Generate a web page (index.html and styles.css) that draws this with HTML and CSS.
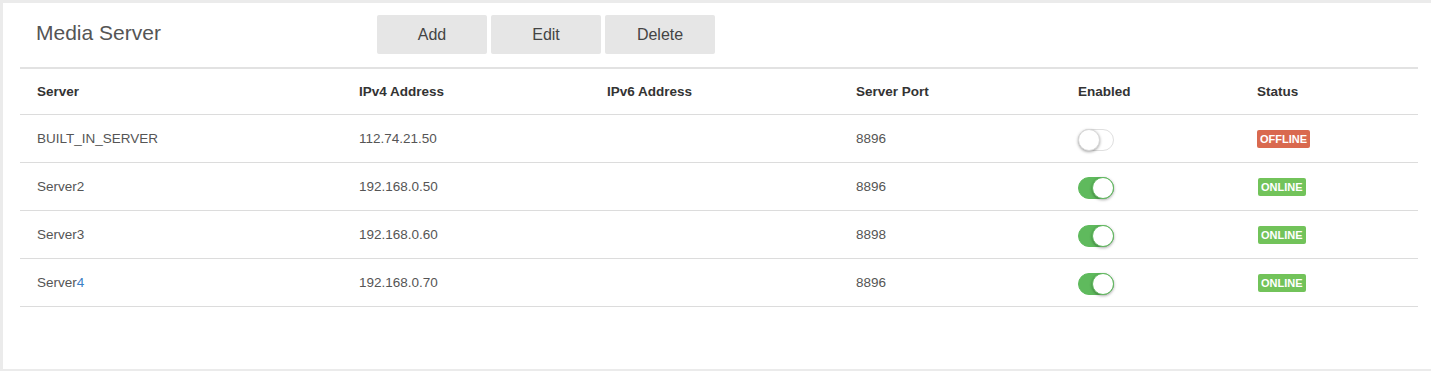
FILE: index.html
```html
<!DOCTYPE html>
<html lang="en">

<head>
  <meta charset="UTF-8">
  <title>Media Server</title>
  <link rel="stylesheet" href="styles.css">
</head>

<body>
  <div class="ms-panel">
    <!-- Title and actions -->
    <div class="ms-header">
      <h2 class="ms-title">Media Server</h2>
      <div class="ms-actions">
        <button class="ms-button">Add</button>
        <button class="ms-button">Edit</button>
        <button class="ms-button">Delete</button>
      </div>
    </div>

    <table class="ms-table">
      <colgroup>
        <col style="width: 322px">
        <col style="width: 248px">
        <col style="width: 249px">
        <col style="width: 222px">
        <col style="width: 179px">
        <col>
      </colgroup>
      <thead>
        <tr>
          <th>Server</th>
          <th>IPv4 Address</th>
          <th>IPv6 Address</th>
          <th>Server Port</th>
          <th>Enabled</th>
          <th>Status</th>
        </tr>
      </thead>
      <tbody>
        <tr>
          <td>BUILT_IN_SERVER</td>
          <td>112.74.21.50</td>
          <td></td>
          <td>8896</td>
          <td><span class="ms-switch"></span></td>
          <td><span class="ms-badge ms-badge-offline">OFFLINE</span></td>
        </tr>
        <tr>
          <td>Server2</td>
          <td>192.168.0.50</td>
          <td></td>
          <td>8896</td>
          <td><span class="ms-switch ms-switch-on"></span></td>
          <td><span class="ms-badge ms-badge-online">ONLINE</span></td>
        </tr>
        <tr>
          <td>Server3</td>
          <td>192.168.0.60</td>
          <td></td>
          <td>8898</td>
          <td><span class="ms-switch ms-switch-on"></span></td>
          <td><span class="ms-badge ms-badge-online">ONLINE</span></td>
        </tr>
        <tr>
          <td>Server<span class="ms-link">4</span></td>
          <td>192.168.0.70</td>
          <td></td>
          <td>8896</td>
          <td><span class="ms-switch ms-switch-on"></span></td>
          <td><span class="ms-badge ms-badge-online">ONLINE</span></td>
        </tr>
      </tbody>
    </table>
  </div>
</body>

</html>
```

FILE: styles.css
```css
body {
  margin: 0;
  padding: 3px 0 2px 3px;
  background-color: #ebebeb;
  font-family: 'Liberation Sans', Arial, sans-serif;
  color: #555;
}

/* White card */
.ms-panel {
  background-color: #fff;
  height: 366px;
  box-sizing: border-box;
  padding: 12px 13px 0 17px;
}

.ms-header {
  display: flex;
  align-items: center;
  height: 39px;
  margin-bottom: 13px;
}

.ms-title {
  margin: 0 0 4px 16px;
  width: 341px;
  font-size: 21px;
  font-weight: 400;
  color: #555;
}

.ms-actions {
  display: flex;
  gap: 4px;
}

.ms-button {
  width: 110px;
  height: 39px;
  padding-top: 2px;
  background-color: #e6e6e6;
  border: none;
  border-radius: 2px;
  font-family: inherit;
  font-size: 16px;
  color: #444;
  cursor: pointer;
}

.ms-button:hover {
  background-color: #dcdcdc;
}

/* Table */
.ms-table {
  width: 100%;
  table-layout: fixed;
  border-collapse: collapse;
  border-top: 2px solid #e2e2e2;
  font-size: 13.5px;
}

.ms-table th {
  height: 45px;
  padding: 0 17px;
  text-align: left;
  font-weight: 700;
  color: #333;
  border-bottom: 1px solid #dcdcdc;
}

.ms-table td {
  height: 47px;
  padding: 0 17px;
  border-bottom: 1px solid #dcdcdc;
  vertical-align: middle;
}

.ms-link {
  color: #3b7fc4;
}

/* Toggle switch */
.ms-switch {
  display: block;
  position: relative;
  width: 36px;
  height: 22px;
  box-sizing: border-box;
  border: 1px solid #dfdfdf;
  border-radius: 11px;
  background-color: #fff;
  margin-top: 2px;
}

.ms-switch::after {
  content: '';
  position: absolute;
  top: -1px;
  left: -1px;
  width: 22px;
  height: 22px;
  box-sizing: border-box;
  border-radius: 50%;
  background-color: #fff;
  border: 1px solid #d8d8d8;
  box-shadow: 0 1px 3px rgba(0, 0, 0, 0.35);
}

.ms-switch-on {
  background-color: #5fba5d;
  border-color: #5fba5d;
}

.ms-switch-on::after {
  left: auto;
  right: -1px;
  border-color: #5fba5d;
}

/* Status badges */
.ms-badge {
  display: inline-block;
  padding: 3px 3px;
  border-radius: 2px;
  font-size: 11px;
  font-weight: 700;
  line-height: 12px;
  color: #fff;
}

.ms-badge-offline {
  background-color: #d9694f;
}

.ms-badge-online {
  margin-left: 1px;
  background-color: #72c35a;
}
```
